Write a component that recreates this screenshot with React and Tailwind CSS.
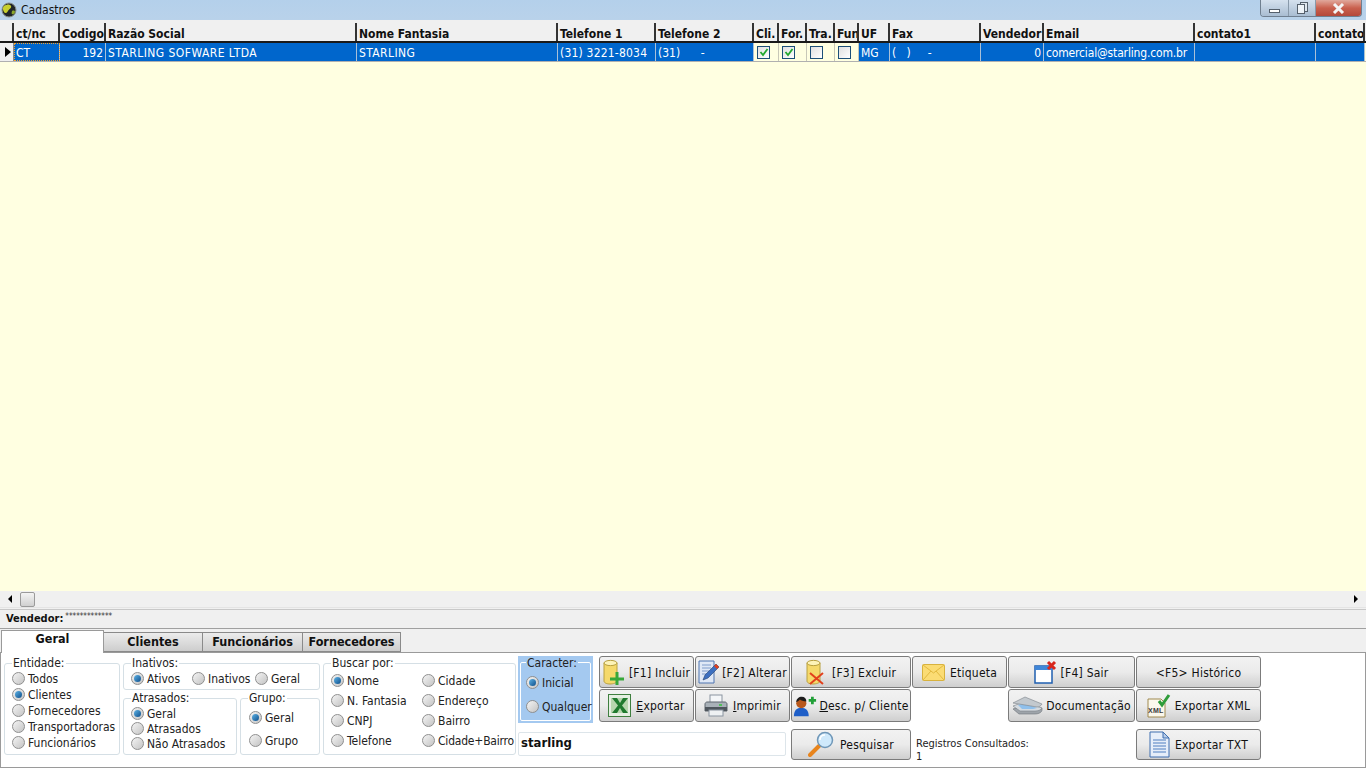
import React from "react";

const font = "[font-family:'DejaVu_Sans_Condensed','DejaVu_Sans',sans-serif]";

const columns = [
    { w: 46, label: "ct/nc", value: "CT", focus: true },
    { w: 46, label: "Codigo", value: "192", right: true },
    { w: 251, label: "Razão Social", value: "STARLING SOFWARE LTDA", track: "tracking-[.45px]" },
    { w: 201, label: "Nome Fantasia", value: "STARLING", track: "tracking-[.4px]" },
    { w: 98, label: "Telefone 1", value: "(31) 3221-8034", track: "tracking-[.2px]" },
    { w: 98, label: "Telefone 2", value: "(31)      -" },
    { w: 25, label: "Cli.", check: true, on: true },
    { w: 28, label: "For.", check: true, on: true },
    { w: 28, label: "Tra.", check: true },
    { w: 24, label: "Fun", check: true },
    { w: 31, label: "UF", value: "MG" },
    { w: 91, label: "Fax", value: "(   )     -" },
    { w: 63, label: "Vendedor", value: "0", right: true },
    { w: 151, label: "Email", value: "comercial@starling.com.br", track: "-tracking-[.16px]" },
    { w: 121, label: "contato1", value: "" },
    { w: 49, label: "contato", value: "" },
];

function Radio({ label, on, className = "" }) {
    return (
        <div className={`flex items-center gap-[3px] text-[12px] leading-none text-[#222] whitespace-nowrap ${className}`}>
            <span className="w-[13px] h-[13px] shrink-0 rounded-full border border-[#8f8f8f] bg-gradient-to-br from-[#f4f4f4] to-[#c4c4c4] flex items-center justify-center">
                {on && <span className="w-[7px] h-[7px] rounded-full bg-gradient-to-br from-[#5fb4e6] to-[#0a4f8c]" />}
            </span>
            {label}
        </div>
    );
}

function Group({ title, className = "", children }) {
    return (
        <div className={`relative border border-[#d5dfe5] rounded-[3px] ${className}`}>
            <span className="absolute -top-[8px] left-[7px] bg-white px-[1px] text-[12px] leading-[14px] text-[#222] whitespace-nowrap">
                {title}
            </span>
            {children}
        </div>
    );
}

function Btn({ children, icon, className = "" }) {
    return (
        <button className={`flex items-center justify-center gap-[2px] border border-[#7b7b7b] rounded-[3px] bg-gradient-to-b from-[#f2f2f2] via-[#ebebeb] to-[#cfcfcf] text-[12px] tracking-[.25px] text-[#111] whitespace-nowrap ${className}`}>
            {icon}
            <span className="mt-[1px]">{children}</span>
        </button>
    );
}

const Db = ({ children }) => (
    <svg width="24" height="26" viewBox="0 0 24 26" className="overflow-visible">
        <path d="M1 4v18c0 2 3 3 6 3s7-1 7-3V4z" fill="#f5d96b" stroke="#b8a040" />
        <ellipse cx="7.500" cy="4" rx="6.500" ry="2.600" fill="#fdf3b8" stroke="#b8a040" />
        {children}
    </svg>
);

const IconAdd = (
    <Db>
        <path d="M7 20h14M14 13v13" stroke="#37a83a" strokeWidth="3" />
    </Db>
);
const IconDel = (
    <Db>
        <path d="M4 14l13 11M17 14L4 25" stroke="#e2401c" strokeWidth="2" />
    </Db>
);
const IconEdit = (
    <svg width="22" height="24" viewBox="0 0 22 24">
        <path d="M1 1h15v22H1z" fill="#dfe8f6" stroke="#4f74b0" />
        <path d="M4 5h9M4 8h9M4 11h7M4 14h5" stroke="#7f9ccb" />
        <path d="M5 20l2-5L18 4l3 3L10 18z" fill="#3c6fc0" stroke="#24406f" strokeWidth=".6" />
        <path d="M18 4l3 3-2 2-3-3z" fill="#e2401c" />
    </svg>
);
const IconMail = (
    <svg width="23" height="17" viewBox="0 0 23 17">
        <rect x=".5" y=".5" width="22" height="16" rx="1" fill="#fbdc74" stroke="#d8b23e" />
        <path d="M1 1l10.500 8L22 1M1 16l8-9M22 16l-8-9" fill="none" stroke="#e2b93f" />
    </svg>
);
const IconWin = (
    <svg width="24" height="25" viewBox="0 0 24 25">
        <rect x="1" y="6" width="17" height="17" fill="#fff" stroke="#1f5fb0" strokeWidth="1.500" />
        <rect x="1" y="6" width="17" height="4" fill="#3f86d8" />
        <path d="M14 2l7 7M21 2l-7 7" stroke="#d8261c" strokeWidth="3" />
    </svg>
);
const IconExcel = (
    <svg width="23" height="23" viewBox="0 0 23 23">
        <rect x=".5" y=".5" width="22" height="22" fill="#e5efe2" stroke="#3f7f3f" />
        <path d="M3 4h17v15H3z" fill="#b7d6ae" />
        <path d="M4 4h5l3 5 3-5h5l-6 7.500 6 7.500h-5l-3-5-3 5H4l6-7.500z" fill="#1f7a2e" />
    </svg>
);
const IconPrint = (
    <svg width="24" height="23" viewBox="0 0 24 23">
        <rect x="6" y="1" width="12" height="8" fill="#f4f6f8" stroke="#8a94a0" />
        <path d="M1 10c0-1 1-2 2-2h18c1 0 2 1 2 2v7H1z" fill="#a9b1b8" stroke="#5e666e" />
        <rect x="1" y="13" width="22" height="4" fill="#4f565d" />
        <rect x="5" y="16" width="14" height="6" fill="#eef1f3" stroke="#8a94a0" />
        <rect x="15" y="10" width="3" height="2" fill="#52c05a" />
    </svg>
);
const IconUser = (
    <svg width="24" height="24" viewBox="0 0 26 24">
        <path d="M1 23c0-6 3-9 8-9s8 3 8 9z" fill="#1f5fc8" />
        <circle cx="9" cy="9" r="5.500" fill="#b8581c" />
        <path d="M3.500 8c0-4 3-6 6-6s5 2 5 5c-3 0-6-1-7-2-1 1-2 2-4 3z" fill="#1c1c1c" />
        <path d="M17 6h8M21 2v8" stroke="#22a038" strokeWidth="3" />
    </svg>
);
const IconSearch = (
    <svg width="28" height="26" viewBox="0 0 28 26">
        <path d="M2 24l9-9" stroke="#e8841c" strokeWidth="4" strokeLinecap="round" />
        <circle cx="17" cy="9" r="7.500" fill="#cfe9fb" stroke="#6f97b8" strokeWidth="1.500" />
        <path d="M12 9c0-3 2-5 5-5" stroke="#fff" strokeWidth="1.500" fill="none" />
    </svg>
);
const IconScan = (
    <svg width="31" height="21" viewBox="0 0 31 21">
        <path d="M1 14l6 5h16c4 0 7-2 7-4v-2H3z" fill="#9ea4aa" stroke="#6d7378" strokeWidth=".6" />
        <path d="M1 11l7 5h15c3 0 6-1 7-3L12 7z" fill="#d5dbe0" stroke="#7b8288" strokeWidth=".6" />
        <path d="M6 10l6-2 13 5-4 1H10z" fill="#8fc0ec" />
        <path d="M1 8l12-6 17 7c-1 2-3 3-5 3z" fill="#c3c9ce" stroke="#7b8288" strokeWidth=".6" />
    </svg>
);
const IconXml = (
    <svg width="23" height="24" viewBox="0 0 23 24" className="overflow-visible">
        <path d="M1 5h13l4 4v14H1z" fill="#fbf8ec" stroke="#a08a50" />
        <text x="1" y="19" fontSize="7" fontWeight="700" fill="#3a3a3a" fontFamily="Liberation Sans">XML</text>
        <path d="M12 7l3 4 7-10" fill="none" stroke="#2e9c3a" strokeWidth="3" />
    </svg>
);
const IconTxt = (
    <svg width="21" height="27" viewBox="0 0 21 27">
        <path d="M1 1h13l6 6v19H1z" fill="#e6eef9" stroke="#3f6fb0" />
        <path d="M14 1v6h6z" fill="#b9cde8" stroke="#3f6fb0" />
        <path d="M4 9h13M4 12h13M4 15h13M4 18h13M4 21h13" stroke="#4f7fc0" />
    </svg>
);

export default function App() {
    return (
        <div className={`w-[1366px] h-[768px] overflow-hidden flex flex-col bg-[#f0f0f0] ${font}`}>
            {/* barra de titulo */}
            <div className="h-[20px] shrink-0 flex items-start bg-gradient-to-b from-[#b4d0eb] to-[#b9d2ea] pl-[1px]">
                <svg width="16" height="16" viewBox="0 0 16 16" className="mt-[2px]">
                    <circle cx="8" cy="8" r="7" fill="#20262a" stroke="#8a9088" />
                    <path d="M3 4c3-2 6-2 7 0s-2 3-3 5-3 3-4 1-2-4 0-6z" fill="#c8cf2e" />
                    <path d="M11 9c2-1 3 0 3 1s-2 3-3 2 0-2 0-3z" fill="#8ea82a" />
                </svg>
                <span className="ml-[4px] mt-[2px] text-[12px] leading-[16px] text-[#111]">Cadastros</span>
                <div className="ml-auto mr-[4px] flex h-[17px] w-[102px] rounded-b-[4px] border border-t-0 border-[#6f7f90] overflow-hidden">
                    <div className="w-[28px] border-r border-[#8899aa] bg-gradient-to-b from-[#d5e1ee] to-[#a9bdd2] flex items-center justify-center">
                        <span className="block w-[11px] h-[4px] mt-[5px] border border-[#55606c] bg-white" />
                    </div>
                    <div className="w-[27px] border-r border-[#8899aa] bg-gradient-to-b from-[#d5e1ee] to-[#a9bdd2] flex items-center justify-center">
                        <svg width="11" height="12" viewBox="0 0 11 12">
                            <rect x="3.500" y=".5" width="7" height="9" fill="#dfe7ef" stroke="#55606c" />
                            <rect x=".5" y="2.500" width="7" height="9" fill="#eef3f8" stroke="#55606c" />
                        </svg>
                    </div>
                    <div className="flex-1 bg-gradient-to-b from-[#e0a89c] via-[#c9604e] to-[#b4483a] flex items-center justify-center">
                        <svg width="13" height="11" viewBox="0 0 13 11">
                            <path d="M2 1l9 9M11 1l-9 9" stroke="#f4f4f4" strokeWidth="3" />
                        </svg>
                    </div>
                </div>
            </div>

            {/* grade */}
            <div className="h-[568px] shrink-0 mt-[3px] bg-[#ffffe1] overflow-hidden">
                <div className="flex h-[20px] bg-[#f0f0f0] border-b-[2px] border-[#1a1a1a]">
                    <div className="w-[14px] shrink-0 border-r-[2px] border-[#333]" />
                    {columns.map((c) => (
                        <div
                            key={c.label}
                            style={{ width: c.w }}
                            className="shrink-0 overflow-hidden border-r-[2px] border-[#333] pl-[2px] text-[12px] leading-[22px] font-bold text-[#111] whitespace-nowrap"
                        >
                            {c.label}
                        </div>
                    ))}
                </div>
                <div className="flex h-[19px] border-b border-[#b0b0b0]">
                    <div className="w-[14px] shrink-0 bg-[#f0f0f0] border-r border-[#888] flex items-center pl-[5px]">
                        <span className="w-0 h-0 border-y-[5px] border-y-transparent border-l-[6px] border-l-black" />
                    </div>
                    {columns.map((c) =>
                        c.check ? (
                            <div
                                key={c.label}
                                style={{ width: c.w }}
                                className="shrink-0 bg-[#ffffe1] border-r border-[#c8c8b8] flex items-center pl-[3px]"
                            >
                                <span className="w-[13px] h-[13px] border border-[#1c4f78] bg-gradient-to-br from-[#e0e0e0] to-white flex items-center justify-center">
                                    {c.on && (
                                        <svg width="10" height="10" viewBox="0 0 10 10">
                                            <path d="M1.500 5l2.500 3 4.500-6" fill="none" stroke="#22a82e" strokeWidth="1.800" />
                                        </svg>
                                    )}
                                </span>
                            </div>
                        ) : (
                            <div
                                key={c.label}
                                style={{ width: c.w }}
                                className={`shrink-0 overflow-hidden bg-[#0066cc] border-r border-[#a8c0d8] px-[2px] text-[12px] leading-[21px] text-white whitespace-pre ${c.track || ""} ${c.right ? "text-right" : ""} ${c.focus ? "outline-1 -outline-offset-1 outline-dotted outline-[#f0a030]" : ""}`}
                            >
                                {c.value}
                            </div>
                        )
                    )}
                </div>
            </div>

            {/* barra de rolagem */}
            <div className="h-[17px] shrink-0 flex items-center bg-[#f0f0f0] border-b border-[#e4e4e4]">
                <span className="ml-[8px] w-0 h-0 border-y-[4px] border-y-transparent border-r-[4px] border-r-black" />
                <span className="ml-[8px] w-[15px] h-[15px] rounded-[2px] border border-[#9a9a9a] bg-gradient-to-b from-[#f4f4f4] to-[#d0d0d0]" />
                <span className="ml-auto mr-[8px] w-0 h-0 border-y-[4px] border-y-transparent border-l-[4px] border-l-black" />
            </div>

            {/* vendedor */}
            <div className="h-[20px] shrink-0 mt-[1px] flex items-center gap-[2px] pl-[6px] bg-[#f0f0f0] border-t border-[#c8c8c8] border-b border-b-[#a0a0a0]">
                <span className="text-[11px] leading-[20px] font-bold text-[#111]">Vendedor:</span>
                <span className="text-[8px] leading-none text-[#333] mb-[4px]">*************</span>
            </div>

            {/* abas */}
            <div className="h-[23px] shrink-0 flex items-end pl-[1px] bg-[#f0f0f0]">
                <div className="w-[103px] h-[23px] -mb-[1px] z-10 bg-white border border-b-0 border-[#9a9a9a] flex items-center justify-center pb-[6px] text-[12.500px] font-bold text-[#111]">
                    Geral
                </div>
                {[["Clientes", 99], ["Funcionários", 100], ["Fornecedores", 98]].map(([t, w]) => (
                    <div
                        key={t}
                        style={{ width: w }}
                        className="h-[20px] border border-l-0 border-[#8a8a8a] bg-gradient-to-b from-[#ececec] to-[#cdcdcd] flex items-center justify-center text-[12.500px] font-bold text-[#111]"
                    >
                        {t}
                    </div>
                ))}
            </div>

            {/* painel */}
            <div className="flex-1 flex bg-white border border-[#9a9a9a] pl-[3px]">
                <Group title="Entidade:" className="w-[116px] h-[92px] mt-[10px] pt-[8px] pl-[7px] flex flex-col gap-[3px]">
                    <Radio label="Todos" className="h-[13px]" />
                    <Radio label="Clientes" on className="h-[13px]" />
                    <Radio label="Fornecedores" className="h-[13px]" />
                    <Radio label="Transportadoras" className="h-[13px]" />
                    <Radio label="Funcionários" className="h-[13px]" />
                </Group>

                <div className="ml-[3px] w-[197px] mt-[10px] flex flex-col gap-[8px]">
                    <Group title="Inativos:" className="h-[27px] flex items-center pl-[7px] pt-[4px]">
                        <Radio label="Ativos" on className="w-[61px]" />
                        <Radio label="Inativos" className="w-[63px]" />
                        <Radio label="Geral" />
                    </Group>
                    <div className="flex gap-[3px]">
                        <Group title="Atrasados:" className="w-[114px] h-[57px] pl-[7px] pt-[8px] flex flex-col gap-[2px]">
                            <Radio label="Geral" on className="h-[13px]" />
                            <Radio label="Atrasados" className="h-[13px]" />
                            <Radio label="Não Atrasados" className="h-[13px]" />
                        </Group>
                        <Group title="Grupo:" className="w-[80px] h-[57px] pl-[8px] pt-[12px] flex flex-col gap-[10px]">
                            <Radio label="Geral" on className="h-[13px]" />
                            <Radio label="Grupo" className="h-[13px]" />
                        </Group>
                    </div>
                </div>

                <Group title="Buscar por:" className="ml-[3px] mt-[10px] w-[193px] h-[92px] pt-[10px] pl-[7px] grid grid-cols-[91px_1fr] gap-y-[7px] content-start">
                    <Radio label="Nome" on className="h-[13px]" />
                    <Radio label="Cidade" className="h-[13px]" />
                    <Radio label="N. Fantasia" className="h-[13px]" />
                    <Radio label="Endereço" className="h-[13px]" />
                    <Radio label="CNPJ" className="h-[13px]" />
                    <Radio label="Bairro" className="h-[13px]" />
                    <Radio label="Telefone" className="h-[13px]" />
                    <Radio label="Cidade+Bairro" className="h-[13px] -tracking-[.2px]" />
                </Group>

                <div className="ml-[2px] w-[744px] flex flex-col">
                    <div className="flex mt-[3px]">
                        <div className="w-[75px] h-[67px] bg-[#a4c9f0] p-[2px] pt-[6px]">
                            <div className="relative h-full border border-white rounded-[2px] pl-[5px] pt-[13px] flex flex-col gap-[11px]">
                                <span className="absolute -top-[7px] left-[5px] bg-[#a4c9f0] px-[1px] text-[12px] leading-[14px] text-[#222]">Caracter:</span>
                                <Radio label="Inicial" on className="h-[13px]" />
                                <Radio label="Qualquer" className="h-[13px]" />
                            </div>
                        </div>
                        <div className="ml-[6px] grid grid-cols-[95px_95px_120px_95px_127px_125px] grid-rows-[32px_33px] gap-x-[1px] gap-y-[1px]">
                            <Btn icon={IconAdd} className="gap-0">[F1] Incluir</Btn>
                            <Btn icon={IconEdit} className="gap-0">[F2] Alterar</Btn>
                            <Btn icon={IconDel} className="gap-0">[F3] Excluir</Btn>
                            <Btn icon={IconMail} className="gap-[5px]">Etiqueta</Btn>
                            <Btn icon={IconWin} className="gap-0">[F4] Sair</Btn>
                            <Btn>{"<F5> Histórico"}</Btn>
                            <Btn icon={IconExcel} className="gap-[5px]"><u>E</u>xportar</Btn>
                            <Btn icon={IconPrint} className="gap-[5px]"><u>I</u>mprimir</Btn>
                            <Btn icon={IconUser} className="gap-0"><u>D</u>esc. p/ Cliente</Btn>
                            <div />
                            <Btn icon={IconScan} className="gap-[3px]">Documentação</Btn>
                            <Btn icon={IconXml} className="gap-[5px]">Exportar XML</Btn>
                        </div>
                    </div>
                    <div className="flex items-start mt-[6px]">
                        <div className="w-[268px] h-[24px] mt-[3px] border border-[#dde5ea] rounded-[2px] px-[2px] text-[13px] leading-[20px] font-bold text-[#111]">
                            starling
                        </div>
                        <Btn icon={IconSearch} className="ml-[5px] w-[120px] h-[31px] gap-[4px] pb-[1px]">Pesquisar</Btn>
                        <div className="ml-[5px] w-[220px] pt-[8px] text-[11px] leading-[13px] text-[#222]">
                            Registros Consultados:
                            <br />1
                        </div>
                        <Btn icon={IconTxt} className="w-[125px] h-[31px] gap-[5px] pb-[1px]">Exportar TXT</Btn>
                    </div>
                </div>
            </div>
        </div>
    );
}
